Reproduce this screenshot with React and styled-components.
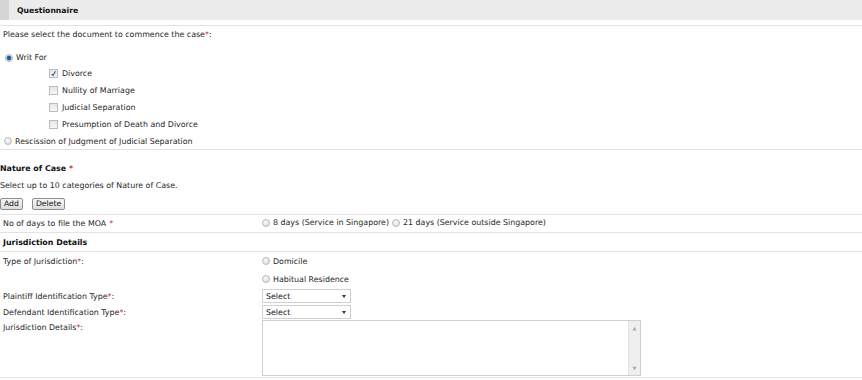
import styled, { createGlobalStyle } from "styled-components";

const Global = createGlobalStyle`
  html, body {
    margin: 0;
    padding: 0;
    background: #fff;
  }
  body {
    font-family: "DejaVu Sans", Verdana, sans-serif;
    font-size: 7.9px;
    color: #262626;
  }
`;

const Page = styled.div`
  width: 862px;
  height: 380px;
  overflow: hidden;
`;

const Header = styled.div`
  height: 20px;
  display: flex;
  align-items: center;
  background: #ececec;
  border-left: 9px solid #d6d6d6;
  padding-left: 8px;
  margin-bottom: 5px;
  font-weight: bold;
  font-size: 7.7px;
  color: #111;
`;

const Block = styled.div`
  border-top: 1px solid #e2e2e2;
  padding: ${(p) => p.$pad || "0 3px"};
`;

const Line = styled.div`
  height: ${(p) => p.$h || 16}px;
  margin-top: ${(p) => p.$mt || 0}px;
  display: flex;
  align-items: center;
  padding-left: ${(p) => p.$indent || 0}px;
  font-weight: ${(p) => (p.$bold ? "bold" : "normal")};
  color: ${(p) => (p.$bold ? "#111" : "inherit")};
`;

const Star = styled.span`
  color: #d42a2a;
  margin-left: ${(p) => (p.$gap ? "3px" : "0")};
`;

const RadioDot = styled.span`
  display: inline-block;
  box-sizing: border-box;
  width: 8px;
  height: 8px;
  border-radius: 50%;
  margin-right: 3px;
  border: 1px solid #b9b9b9;
  background: ${(p) =>
    p.$on
      ? "radial-gradient(circle, #1d5f9c 0 1.6px, #5d93c4 2.2px, #e4e4e4 2.8px)"
      : "radial-gradient(circle at 40% 35%, #fafafa, #d8d8d8)"};
`;

const Box = styled.span`
  position: relative;
  display: inline-block;
  box-sizing: border-box;
  width: 9px;
  height: 9px;
  margin-right: 4px;
  border: 1px solid #bdbdbd;
  background: linear-gradient(#e6e6e6, #f6f6f6);
`;

const Tick = styled.svg`
  position: absolute;
  left: 0;
  top: 0;
  width: 7px;
  height: 7px;
`;

const Opt = styled.label`
  display: inline-flex;
  align-items: center;
  margin-right: ${(p) => p.$mr || 0}px;
`;

const Buttons = styled.div`
  display: flex;
  gap: 9px;
  height: 21px;
  align-items: center;
`;

const Btn = styled.button`
  font: inherit;
  font-size: 7.7px;
  color: #111;
  height: 12px;
  padding: 0 3px;
  border: 1px solid #8d8d8d;
  border-radius: 2px;
  background: linear-gradient(#f7f7f7, #dcdcdc);
  line-height: 10px;
`;

const Row = styled.div`
  display: grid;
  grid-template-columns: 259px 1fr;
  align-items: center;
  height: ${(p) => p.$h || 16}px;
  padding-left: 3px;
  border-top: ${(p) => (p.$line ? "1px solid #e2e2e2" : "none")};
`;

const Stack = styled.div`
  display: flex;
  flex-direction: column;
`;

const TypeRow = styled.div`
  display: grid;
  grid-template-columns: 259px 1fr;
  padding-left: 3px;
  border-top: 1px solid #e2e2e2;
`;

const Select = styled.div`
  box-sizing: border-box;
  width: 89px;
  height: 14px;
  border: 1px solid #d0d0d0;
  background: #fff;
  display: flex;
  align-items: center;
  justify-content: space-between;
  padding: 0 4px 0 3px;
  color: #111;
`;

const Caret = styled.span`
  width: 0;
  height: 0;
  border-left: 2.5px solid transparent;
  border-right: 2.5px solid transparent;
  border-top: 3px solid #333;
`;

const Area = styled.div`
  box-sizing: border-box;
  width: 379px;
  height: 56px;
  border: 1px solid #cfcfcf;
  display: flex;
  justify-content: flex-end;
  background: #fff;
`;

const Scroll = styled.div`
  width: 11px;
  background: #efefef;
  border-left: 1px solid #e2e2e2;
  display: flex;
  flex-direction: column;
  justify-content: space-between;
  align-items: center;
  padding: 4px 0;
  color: #aaa;
  font-size: 5px;
`;

const DetailsRow = styled.div`
  display: grid;
  grid-template-columns: 259px 1fr;
  padding: 0 0 1px 3px;
  border-bottom: 1px solid #e2e2e2;
`;

const DetailsLabel = styled.span`
  padding-top: 3px;
`;

const Check = ({ on, children }) => (
  <Line $h={17} $indent={46}>
    <Opt>
      <Box>
        {on && (
          <Tick viewBox="0 0 7 7">
            <path d="M1.6 4 L3 5.6 L5.4 1.2" stroke="#2b5e9a" strokeWidth="1.1" fill="none" />
          </Tick>
        )}
      </Box>
      {children}
    </Opt>
  </Line>
);

export default function App() {
  return (
    <Page>
      <Global />
      <Header>Questionnaire</Header>
      <Block $pad="0 3px 0 3px">
        <Line $h={17}>
          Please select the document to commence the case<Star>*</Star>:
        </Line>
        <Line $h={15} $mt={7} $indent={2}>
          <Opt>
            <RadioDot $on />
            Writ For
          </Opt>
        </Line>
        <Check on>Divorce</Check>
        <Check>Nullity of Marriage</Check>
        <Check>Judicial Separation</Check>
        <Check>Presumption of Death and Divorce</Check>
        <Line $h={16} $indent={1}>
          <Opt>
            <RadioDot />
            Rescission of Judgment of Judicial Separation
          </Opt>
        </Line>
      </Block>
      <Block $pad="10px 0 0 0">
        <Line $h={17} $bold>
          Nature of Case<Star $gap>*</Star>
        </Line>
        <Line $h={16}>Select up to 10 categories of Nature of Case.</Line>
        <Buttons>
          <Btn>Add</Btn>
          <Btn>Delete</Btn>
        </Buttons>
      </Block>
      <Row $line $h={17}>
        <span>
          No of days to file the MOA<Star $gap>*</Star>
        </span>
        <div>
          <Opt $mr={3}>
            <RadioDot />8 days (Service in Singapore)
          </Opt>
          <Opt>
            <RadioDot />
            21 days (Service outside Singapore)
          </Opt>
        </div>
      </Row>
      <Row $line $h={18}>
        <b style={{ color: "#111" }}>Jurisdiction Details</b>
      </Row>
      <TypeRow>
        <Line $h={18}>
          Type of Jurisdiction<Star>*</Star>:
        </Line>
        <Stack>
          <Line $h={18}>
            <Opt>
              <RadioDot />
              Domicile
            </Opt>
          </Line>
          <Line $h={18}>
            <Opt>
              <RadioDot />
              Habitual Residence
            </Opt>
          </Line>
        </Stack>
      </TypeRow>
      <Row $h={16}>
        <span>
          Plaintiff Identification Type<Star>*</Star>:
        </span>
        <Select>
          Select <Caret />
        </Select>
      </Row>
      <Row $h={16}>
        <span>
          Defendant Identification Type<Star>*</Star>:
        </span>
        <Select>
          Select <Caret />
        </Select>
      </Row>
      <DetailsRow>
        <DetailsLabel>
          Jurisdiction Details<Star>*</Star>:
        </DetailsLabel>
        <Area>
          <Scroll>
            <span>▲</span>
            <span>▼</span>
          </Scroll>
        </Area>
      </DetailsRow>
    </Page>
  );
}
